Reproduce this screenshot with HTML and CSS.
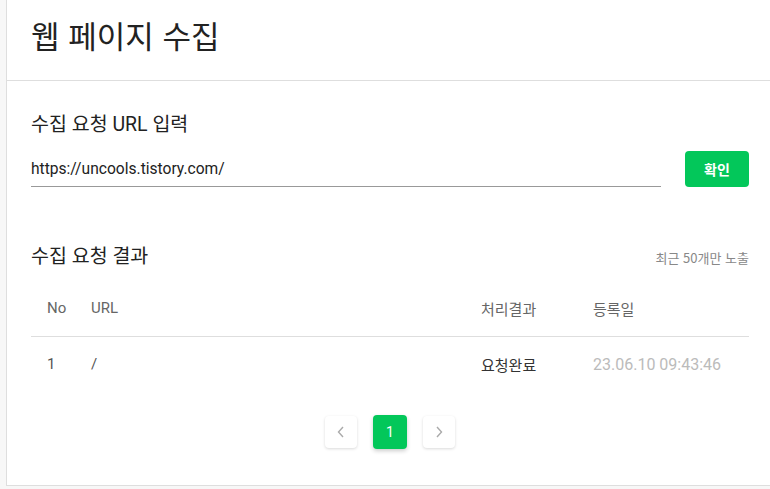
FILE: index.html
```html
<!DOCTYPE html>
<html lang="ko">
<head>
<meta charset="utf-8">
<title>웹 페이지 수집</title>
<link rel="stylesheet" href="styles.css">
</head>
<body>
<div class="panel">
  <header class="header">
    <h1 class="title">웹 페이지 수집</h1>
  </header>
  <main class="content">
    <section class="request">
      <h2 class="section-title">수집 요청 URL 입력</h2>
      <div class="input-row">
        <input class="url-input" type="text" value="https://uncools.tistory.com/">
        <button class="confirm-btn" type="button">확인</button>
      </div>
    </section>
    <section class="result">
      <div class="result-head">
        <h2 class="section-title">수집 요청 결과</h2>
        <span class="note">최근 50개만 노출</span>
      </div>
      <div class="table">
        <div class="row row-head">
          <span>No</span>
          <span>URL</span>
          <span>처리결과</span>
          <span>등록일</span>
        </div>
        <div class="row row-body">
          <span>1</span>
          <span>/</span>
          <span class="status">요청완료</span>
          <span class="date">23.06.10 09:43:46</span>
        </div>
      </div>
      <nav class="pager">
        <button class="page-btn" type="button" aria-label="이전">
          <svg width="8" height="12" viewBox="0 0 8 12"><path d="M6 1 L1.5 6 L6 11" fill="none" stroke="#aaa" stroke-width="1.4"/></svg>
        </button>
        <button class="page-btn active" type="button">1</button>
        <button class="page-btn" type="button" aria-label="다음">
          <svg width="8" height="12" viewBox="0 0 8 12"><path d="M2 1 L6.5 6 L2 11" fill="none" stroke="#aaa" stroke-width="1.4"/></svg>
        </button>
      </nav>
    </section>
  </main>
</div>
</body>
</html>
```
FILE: styles.css
```css
* { box-sizing: border-box; }
html, body { margin: 0; padding: 0; }
body {
  background: #f7f7f7;
  font-family: Roboto, "Noto Sans CJK KR", sans-serif;
  color: #222;
}
.panel {
  margin-left: 6px;
  height: 486px;
  background: #fff;
  border-left: 1px solid #dedede;
  border-bottom: 1px solid #dedede;
}
.header {
  height: 81px;
  border-bottom: 1px solid #dedede;
  padding: 13px 0 0 24px;
}
.title {
  margin: 0;
  font-family: "Noto Sans CJK KR", sans-serif;
  font-weight: 400;
  font-size: 31px;
  line-height: 44px;
  color: #222;
}
.content {
  padding: 0 21px 0 24px;
}
.request { padding-top: 30px; }
.section-title {
  margin: 0;
  font-family: Roboto, "Noto Sans CJK KR", sans-serif;
  font-weight: 400;
  font-size: 19.5px;
  line-height: 28px;
  color: #222;
}
.input-row {
  display: flex;
  align-items: flex-end;
  gap: 24px;
  margin-top: 12px;
}
.url-input {
  flex: 1;
  border: 0;
  border-bottom: 1px solid #999;
  padding: 0 0 6px;
  font-family: Roboto, "Noto Sans CJK KR", sans-serif;
  font-size: 15.6px;
  line-height: 22px;
  color: #222;
  outline: none;
  margin-bottom: 0;
}
.confirm-btn {
  width: 64px;
  height: 36px;
  border: 0;
  border-radius: 4px;
  background: #03c75a;
  color: #fff;
  font-family: "Noto Sans CJK KR", sans-serif;
  font-weight: 700;
  font-size: 14px;
}
.result { padding-top: 56px; }
.result-head {
  display: flex;
  justify-content: space-between;
  align-items: center;
}
.note {
  font-family: "Noto Sans CJK KR", sans-serif;
  font-size: 13px;
  color: #888;
}
.table { margin-top: 9px; }
.row {
  display: grid;
  grid-template-columns: 44px 1fr 112px 156px;
  align-items: center;
  padding-left: 16px;
  font-size: 15px;
}
.row-head {
  height: 57px;
  border-bottom: 1px solid #dedede;
  color: #666;
}
.row-body {
  height: 54px;
  color: #555;
}
.status { color: #333; }
.date { color: #bbb; font-size: 16px; }
.pager {
  display: flex;
  justify-content: center;
  align-items: center;
  gap: 16px;
  margin-top: 24px;
}
.page-btn {
  width: 32px;
  height: 32px;
  border: 0;
  border-radius: 4px;
  background: #fff;
  box-shadow: 0 1px 3px rgba(0,0,0,0.15);
  display: flex;
  align-items: center;
  justify-content: center;
  padding: 0;
  font-family: Roboto, sans-serif;
  font-size: 14px;
  color: #fff;
}
.page-btn.active {
  width: 34px;
  height: 34px;
  background: #03c75a;
  box-shadow: 0 2px 4px rgba(0,0,0,0.2);
}
```
